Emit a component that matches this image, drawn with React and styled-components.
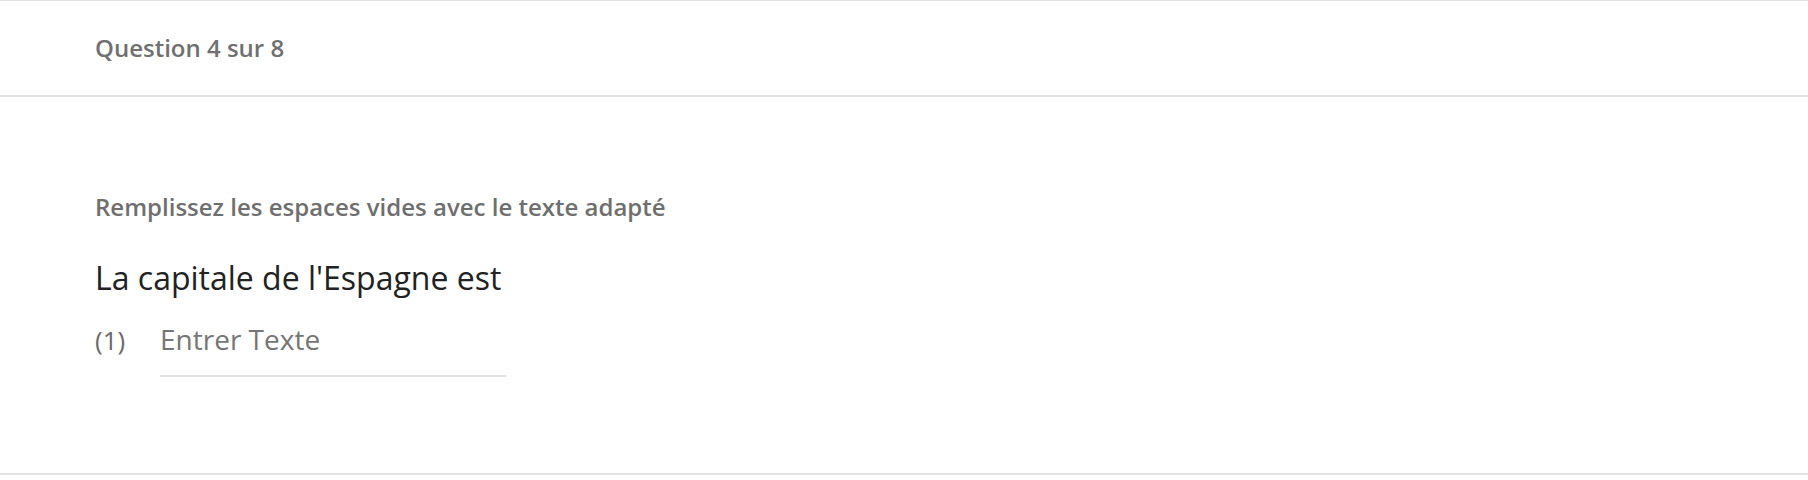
import React from 'react'
import styled, { createGlobalStyle } from 'styled-components'

const GlobalStyle = createGlobalStyle`
  body {
    margin: 0;
    background: #fff;
    font-family: 'Open Sans', 'Noto Sans', sans-serif;
  }
`

const questions = [
  {
    instruction: 'Remplissez les espaces vides avec le texte adapté',
    text: "La capitale de l'Espagne est",
    blanks: [{ id: 1, placeholder: 'Entrer Texte' }],
  },
]

const App = () => {
  const current = 4
  const total = 8
  const question = questions[0]

  return (
    <>
      <GlobalStyle />
      <Root>
        <Header>
          <Counter>
            Question {current} sur {total}
          </Counter>
        </Header>
        <Body>
          <Instruction>{question.instruction}</Instruction>
          <QuestionText>{question.text}</QuestionText>
          {question.blanks.map(blank => (
            <AnswerRow key={blank.id}>
              <BlankLabel>({blank.id})</BlankLabel>
              <AnswerInput type="text" placeholder={blank.placeholder} />
            </AnswerRow>
          ))}
        </Body>
      </Root>
    </>
  )
}

const Root = styled.div`
  border-top: 1px solid #e2e2e2;
  width: 100%;
`

const Header = styled.div`
  display: flex;
  align-items: center;
  padding: 29px 95px;
  border-bottom: 2px solid #e2e2e2;
`

const Counter = styled.div`
  font-size: 24px;
  line-height: 36px;
  font-weight: 600;
  color: #707070;
`

const Body = styled.div`
  display: flex;
  flex-direction: column;
  padding: 94px 95px 96px;
  border-bottom: 2px solid #e2e2e2;
`

const Instruction = styled.div`
  font-size: 24px;
  line-height: 32px;
  font-weight: 600;
  color: #6f6f6f;
  margin-bottom: 33px;
`

const QuestionText = styled.div`
  font-size: 32px;
  line-height: 44px;
  color: #222;
  margin-bottom: 20px;
`

const AnswerRow = styled.div`
  display: flex;
  align-items: baseline;
`

const BlankLabel = styled.span`
  width: 65px;
  flex-shrink: 0;
  font-size: 26px;
  line-height: 38px;
  color: #6a6a6a;
`

const AnswerInput = styled.input`
  width: 346px;
  box-sizing: border-box;
  border: none;
  border-bottom: 2px solid #e2e2e2;
  padding: 0 0 17px;
  margin: 0;
  outline: none;
  background: transparent;
  font-family: 'Open Sans', 'Noto Sans', sans-serif;
  font-size: 28px;
  line-height: 38px;
  color: #222;

  &::placeholder {
    color: #767676;
  }
`

export default App
